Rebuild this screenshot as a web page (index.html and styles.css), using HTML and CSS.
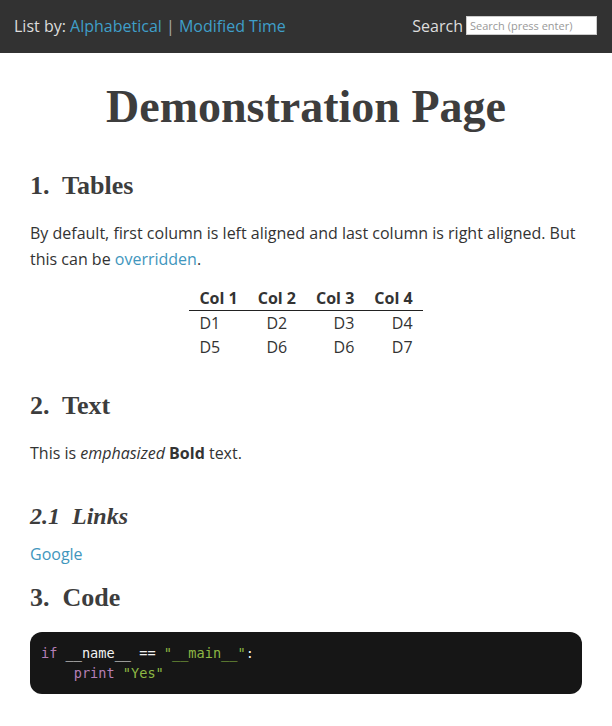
FILE: index.html
```html
<!DOCTYPE html>
<html>
<head>
<meta charset="utf-8">
<link rel="stylesheet" href="styles.css">
</head>
<body>
<header class="topbar">
  <div class="listby">List by: <a href="#">Alphabetical</a> <span class="sep">|</span> <a href="#">Modified Time</a></div>
  <div class="search">Search <input type="text" placeholder="Search (press enter)"></div>
</header>
<main class="content">
  <h1 class="title">Demonstration Page</h1>
  <h2 class="sec first">1.&nbsp; Tables</h2>
  <p class="para">By default, first column is left aligned and last column is right aligned. But this can be <a href="#">overridden</a>.</p>
  <table class="tbl">
    <thead>
      <tr><th class="l">Col 1</th><th class="c">Col 2</th><th class="r">Col 3</th><th class="r">Col 4</th></tr>
    </thead>
    <tbody>
      <tr><td class="l">D1</td><td class="c">D2</td><td class="r">D3</td><td class="r">D4</td></tr>
      <tr><td class="l">D5</td><td class="c">D6</td><td class="r">D6</td><td class="r">D7</td></tr>
    </tbody>
  </table>
  <h2 class="sec">2.&nbsp; Text</h2>
  <p class="para">This is <em>emphasized</em> <strong>Bold</strong> text.</p>
  <h3 class="sub">2.1&nbsp; Links</h3>
  <p class="para tight"><a href="#">Google</a></p>
  <h2 class="sec code-head">3.&nbsp; Code</h2>
  <pre class="code"><span class="kw">if</span> __name__ == <span class="str">"__main__"</span>:
    <span class="kw">print</span> <span class="str">"Yes"</span></pre>
</main>
</body>
</html>
```

FILE: styles.css
```css
html, body { margin: 0; padding: 0; background: #fff; }
body { font-family: "Open Sans", "Noto Sans", sans-serif; color: #333; font-size: 16px; }
a { color: #4196bd; text-decoration: none; }

.topbar {
  background: #323232;
  height: 53px;
  display: flex;
  align-items: center;
  justify-content: space-between;
  padding: 0 15px 0 14px;
  color: #ddd;
  font-size: 16px;
}
.listby { margin-top: -2px; }
.topbar a { color: #3f9fc9; }
.sep { color: #aaa; }
.search { display: flex; align-items: center; gap: 3px; margin-top: -2px; }
.search input {
  width: 131px; height: 19px; box-sizing: border-box; border: 1px solid #ccc;
  font-family: "Open Sans", sans-serif; font-size: 11px; padding: 1px 3px; margin: 0;
}
.search input::placeholder { color: #999; }

.content { padding: 0 30px; }
.title {
  font-family: "Liberation Serif", "Times New Roman", serif;
  font-weight: bold; font-size: 46px; text-align: center;
  margin: 28px 0 0; line-height: 52px; color: #3d3d3d;
}
.sec {
  font-family: "Liberation Serif", serif; font-weight: bold; font-size: 26px;
  margin: 32px 0 0; line-height: 30px; color: #3d3d3d;
}
.sec.first { margin-top: 38px; }
.sub {
  font-family: "Liberation Serif", serif; font-weight: bold; font-style: italic; font-size: 24px;
  margin: 35px 0 0; line-height: 30px; color: #3d3d3d;
}
.para { margin: 19px 0 0; line-height: 26px; }
.para.tight { margin-top: 10px; }
.sec.code-head { margin-top: 16px; }
.tbl { margin: 14px auto 0; border-collapse: collapse; }
.tbl th { font-weight: bold; padding: 0 10px; line-height: 24px; border-bottom: 1px solid #222; }
.tbl td { padding: 0 10px; line-height: 24px; }
.l { text-align: left; } .c { text-align: center; } .r { text-align: right; }
.code {
  margin: 19px 0 0; background: #161616; color: #f2f2f2; border-radius: 12px;
  font-family: "DejaVu Sans Mono", monospace; font-size: 13.6px; line-height: 20px;
  padding: 11px 11px;
}
.kw { color: #b57fb5; }
.str { color: #8db744; }
```
